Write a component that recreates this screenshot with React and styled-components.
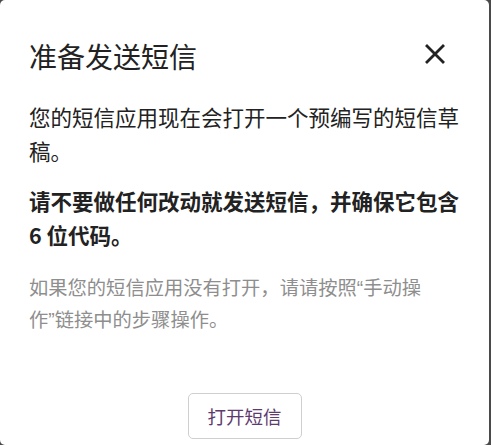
import React from 'react'
import styled, { createGlobalStyle } from 'styled-components'

const GlobalStyle = createGlobalStyle`
    html, body {
        margin: 0;
        padding: 0;
        background: #4a4a4a;
    }
    body {
        font-family: "Noto Sans CJK SC", "Noto Sans", sans-serif;
    }
`
const Dialog = styled.div`
    width: 489px;
    height: 445px;
    box-sizing: border-box;
    background: #ffffff;
    border-radius: 5px;
    padding: 38px 45px 0 29px;
    display: flex;
    flex-direction: column;
`
const Header = styled.div`
    display: flex;
    justify-content: space-between;
    align-items: flex-start;
`
const Title = styled.h2`
    margin: 0;
    font-size: 28px;
    line-height: 36px;
    font-weight: 400;
    color: #222222;
`
const CloseButton = styled.button`
    margin: 6px -1px 0 0;
    padding: 0;
    border: none;
    background: none;
    width: 20px;
    height: 20px;
    cursor: pointer;
    color: #222222;
    display: flex;
`
const Body = styled.div`
    margin-top: 26px;
    width: 432px;
    display: flex;
    flex-direction: column;
`
const Text = styled.p`
    margin: 0 0 ${p => p.$gap || 0}px;
    font-size: 21.5px;
    line-height: 34px;
    color: #222222;
    font-weight: ${p => (p.$bold ? 700 : 400)};
`
const Hint = styled.p`
    margin: 0;
    max-width: 410px;
    font-size: 19.3px;
    line-height: 30px;
    color: #8e8e8e;
`
const Quote = styled.span`
    font-family: "Liberation Sans", sans-serif;
`
const Footer = styled.div`
    margin-top: 57px;
    margin-right: -16px;
    display: flex;
    justify-content: center;
`
const OpenButton = styled.button`
    width: 114px;
    height: 46px;
    border: 1px solid #cfcfcf;
    border-radius: 5px;
    background: #ffffff;
    font-family: inherit;
    font-size: 18.5px;
    color: #5e3a6e;
    cursor: pointer;
`

const App = () => {
  return (
    <>
      <GlobalStyle />
      <Dialog>
        <Header>
          <Title>准备发送短信</Title>
          <CloseButton aria-label="关闭">
            <svg width="20" height="20" viewBox="0 0 20 20">
              <path d="M2 2 L18 18 M18 2 L2 18" stroke="currentColor" strokeWidth="2.8" strokeLinecap="square" fill="none" />
            </svg>
          </CloseButton>
        </Header>
        <Body>
          <Text $gap={16}>您的短信应用现在会打开一个预编写的短信草稿。</Text>
          <Text $bold $gap={20}>请不要做任何改动就发送短信，并确保它包含 6 位代码。</Text>
          <Hint>
            如果您的短信应用没有打开，请请按照<Quote>“</Quote>手动操作<Quote>”</Quote>链接中的步骤操作。
          </Hint>
        </Body>
        <Footer>
          <OpenButton>打开短信</OpenButton>
        </Footer>
      </Dialog>
    </>
  )
}

export default App
